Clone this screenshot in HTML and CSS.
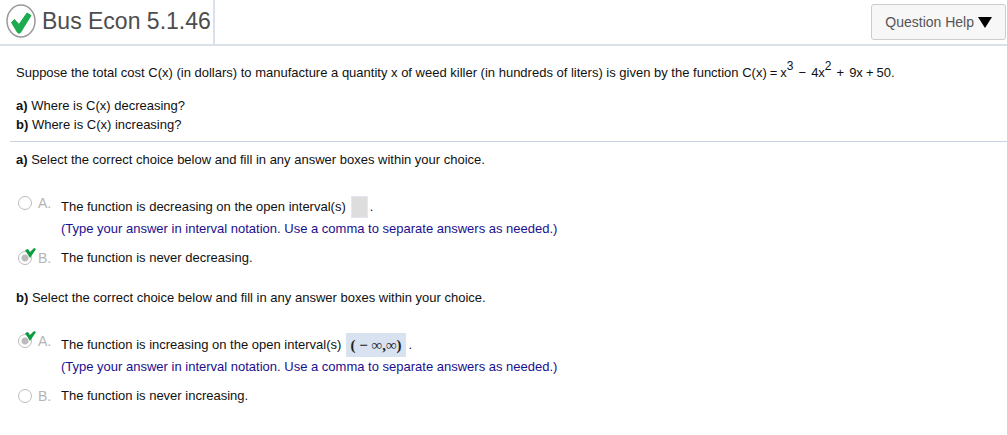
FILE: index.html
```html
<!DOCTYPE html>
<html lang="en">
<head>
    <meta charset="UTF-8">
    <meta name="viewport" content="width=device-width, initial-scale=1.0">
    <title>Bus Econ 5.1.46</title>
    <link rel="stylesheet" href="styles.css">
</head>
<body>

    <header class="topbar">
        <div class="title">
            <svg class="status" viewBox="0 0 30 34" preserveAspectRatio="none" aria-hidden="true">
                <ellipse cx="15" cy="17" rx="14" ry="16" fill="#fff" stroke="#999" stroke-width="1.5"/>
                <path d="M5.500 18.500l3-3 4.500 5 8-11.500 4 2.500-10.500 17q-1.500 1.500-3 0z" fill="#1cab4e" stroke="#1cab4e" stroke-linejoin="round"/>
            </svg>
            <h1>Bus Econ 5.1.46</h1>
        </div>
        <button class="help" type="button">Question Help
            <svg class="arrow" viewBox="0 0 14 11" aria-hidden="true"><path d="M0 0h14L7 11z"/></svg>
        </button>
    </header>

    <section class="problem">
        <p class="statement">Suppose the total cost C(x) (in dollars) to manufacture a quantity x of weed killer (in hundreds of liters) is given by the function <span class="formula"><span>C(x)</span><span>=</span><span>x<sup>3</sup></span><span class="op">−</span><span>4x<sup>2</sup></span><span class="op">+</span><span>9x</span><span>+</span><span>50.</span></span></p>
        <p><b>a)</b> Where is C(x) decreasing?</p>
        <p><b>b)</b> Where is C(x) increasing?</p>
    </section>

    <form class="answers">
        <section class="part">
            <p><b>a)</b> Select the correct choice below and fill in any answer boxes within your choice.</p>
            <div class="choices">
                <div class="choice fill-in">
                    <span class="mark"><input type="radio" name="partA" id="a1" disabled></span>
                    <label class="letter" for="a1">A.</label>
                    <div class="text">
                        <div class="line"><label for="a1-answer">The function is decreasing on the open interval(s)</label><input class="answer empty" type="text" id="a1-answer" readonly>.</div>
                        <div class="hint">(Type your answer in interval notation. Use a comma to separate answers as needed.)</div>
                    </div>
                </div>
                <div class="choice">
                    <span class="mark"><input type="radio" name="partA" id="a2" checked disabled><svg class="tick" viewBox="0 0 11 10" aria-hidden="true"><path d="M0 2l3-1 2 3 4-4 2 1-6 9z" fill="#0c9b3f"/></svg></span>
                    <label class="letter" for="a2">B.</label>
                    <label class="text" for="a2">The function is never decreasing.</label>
                </div>
            </div>
        </section>

        <section class="part">
            <p><b>b)</b> Select the correct choice below and fill in any answer boxes within your choice.</p>
            <div class="choices">
                <div class="choice fill-in">
                    <span class="mark"><input type="radio" name="partB" id="b1" checked disabled><svg class="tick" viewBox="0 0 11 10" aria-hidden="true"><path d="M0 2l3-1 2 3 4-4 2 1-6 9z" fill="#0c9b3f"/></svg></span>
                    <label class="letter" for="b1">A.</label>
                    <div class="text">
                        <div class="line"><label for="b1-answer">The function is increasing on the open interval(s)</label><input class="answer" type="text" id="b1-answer" value="( − ∞,∞)" readonly>.</div>
                        <div class="hint">(Type your answer in interval notation. Use a comma to separate answers as needed.)</div>
                    </div>
                </div>
                <div class="choice">
                    <span class="mark"><input type="radio" name="partB" id="b2" disabled></span>
                    <label class="letter" for="b2">B.</label>
                    <label class="text" for="b2">The function is never increasing.</label>
                </div>
            </div>
        </section>
    </form>

</body>
</html>
```
FILE: styles.css
```css
* {
    margin: 0;
    padding: 0;
    box-sizing: border-box;
}
body {
    font-family: "Liberation Sans", Arial, sans-serif;
    font-size: 13px;
    line-height: 19px;
    color: #111;
    background: #fff;
}

/* header */
.topbar {
    display: flex;
    justify-content: space-between;
    align-items: flex-start;
    border-bottom: 2px solid #dbe1e9;
}
.title {
    display: flex;
    align-items: center;
    gap: 6px;
    height: 44px;
    padding: 0 2px 2px 6px;
    border-right: 2px solid #dbe1e9;
}
.status {
    width: 30px;
    height: 34px;
}
h1 {
    font-size: 23px;
    font-weight: normal;
    line-height: 30px;
    color: #4d4d4d;
}
.help {
    display: flex;
    align-items: center;
    gap: 4px;
    height: 36px;
    margin: 4px 1px 0 0;
    padding: 0 13px;
    font-family: inherit;
    font-size: 14px;
    color: #555;
    background: #f7f7f7;
    border: 1px solid #ccc;
    border-radius: 3px;
}
.arrow {
    width: 14px;
    height: 11px;
}

/* problem statement */
.problem {
    margin-left: 10px;
    padding: 17px 6px 7px;
    border-bottom: 1px solid #c9d3e2;
}
.statement {
    margin-bottom: 14px;
}
.formula {
    display: inline-flex;
    gap: 3px;
    white-space: nowrap;
}
.formula .op {
    margin: 0 2px;
}
sup {
    font-size: 12px;
    line-height: 0;
    vertical-align: 7px;
}

/* answer parts */
.answers {
    padding: 8px 16px;
}
.part {
    margin-bottom: 19px;
}
.choices {
    display: flex;
    flex-direction: column;
    gap: 7px;
    margin-top: 23px;
}
.choice {
    display: flex;
    line-height: 22px;
}
.mark {
    position: relative;
    display: flex;
    align-items: center;
    width: 22px;
    height: 22px;
    padding-left: 2px;
}
.mark input {
    appearance: none;
    width: 14px;
    height: 14px;
    border: 1px solid #bbb;
    border-radius: 50%;
    background: #fff;
}
.mark input:checked {
    background: radial-gradient(circle, #bbb 3px, #fff 4px);
}
.tick {
    position: absolute;
    top: 1px;
    left: 9px;
    width: 11px;
    height: 10px;
}
.letter {
    width: 23px;
    font-size: 14px;
    color: #b5b5b5;
}
.fill-in .text {
    padding-top: 4px;
}
.line {
    display: flex;
    align-items: center;
    height: 22px;
}
.answer {
    width: 60px;
    height: 24px;
    margin: 0 2px 0 5px;
    padding: 0 4px;
    font-family: "Liberation Serif", "Times New Roman", serif;
    font-size: 15px;
    font-weight: bold;
    color: #222;
    background: #d9e2f1;
    border: none;
}
.answer.empty {
    width: 17px;
    height: 22px;
    background: #ddd;
    border: 1px solid #e4e7f0;
}
.hint {
    color: #1a0f8f;
}
```
